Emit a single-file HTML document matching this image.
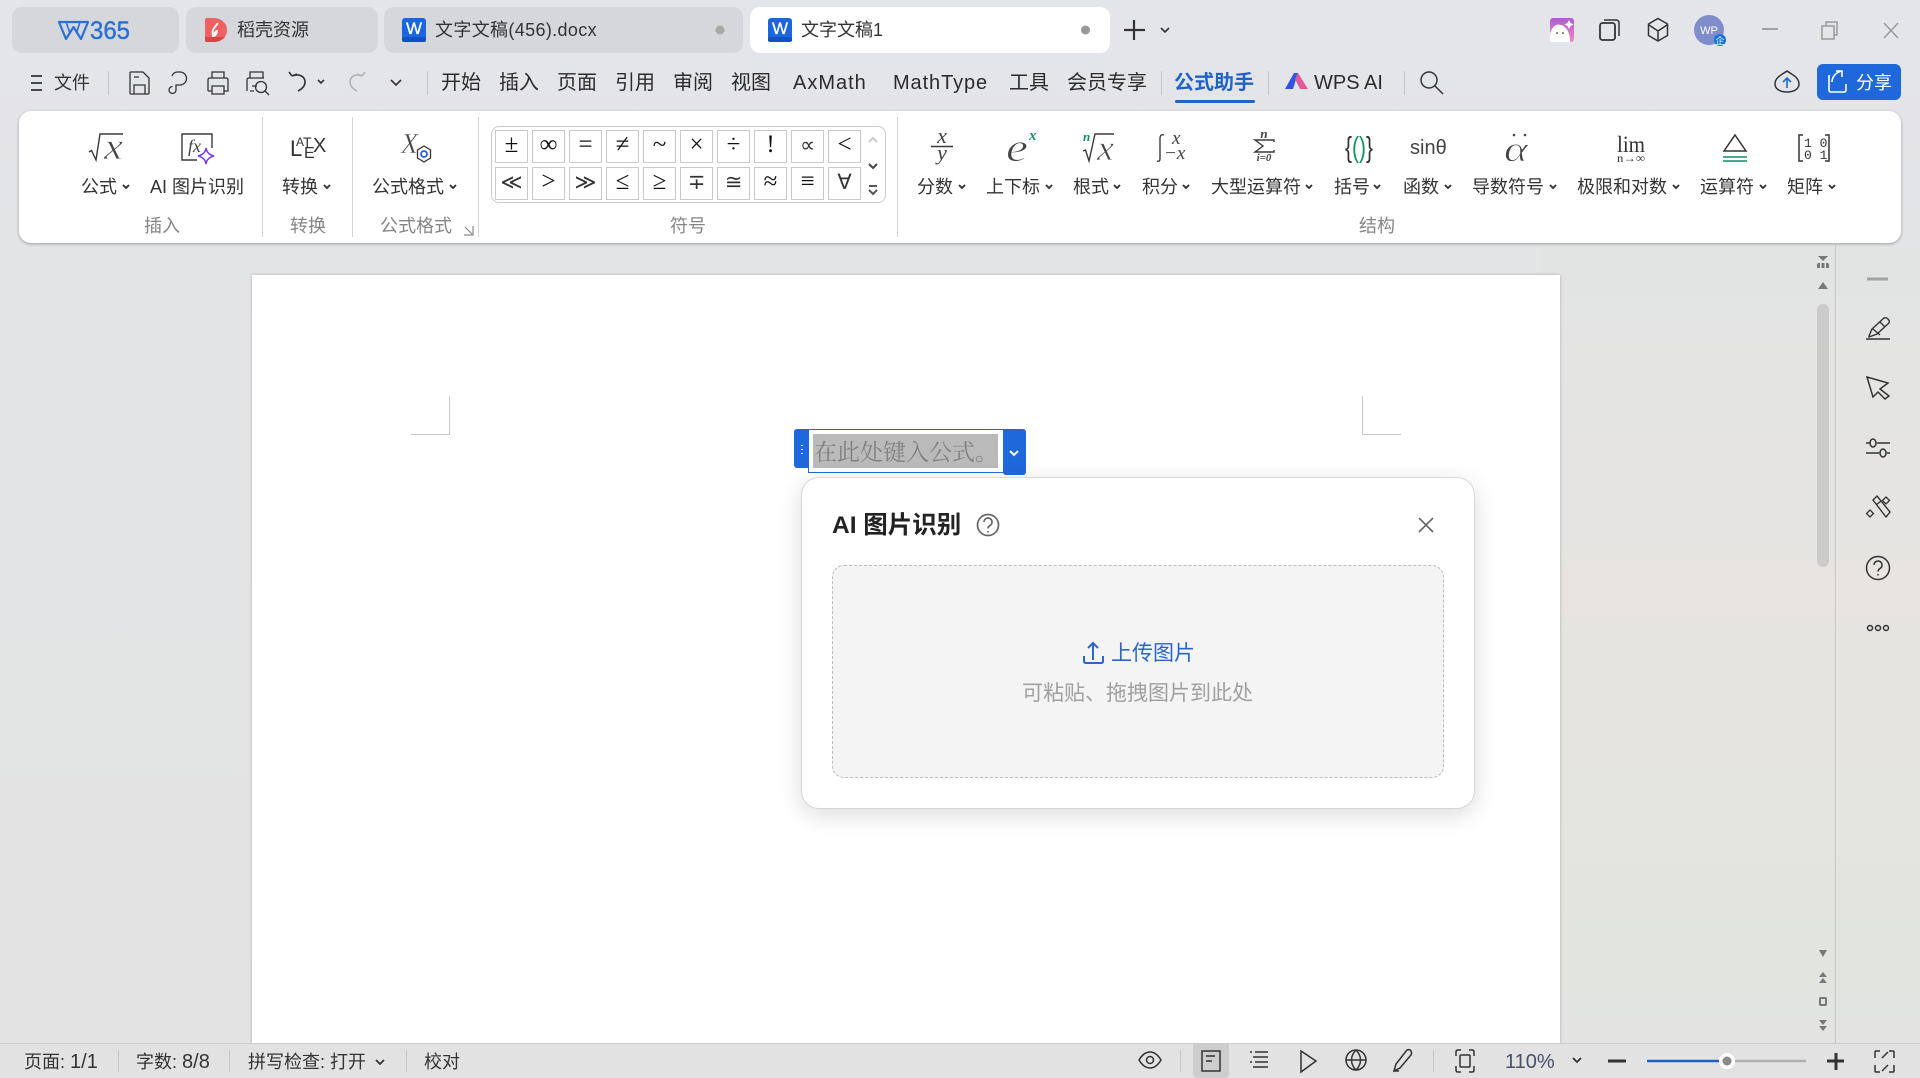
<!DOCTYPE html>
<html lang="zh"><head><meta charset="utf-8"><title>文字文稿1</title>
<style>
html,body{margin:0;padding:0}
body{width:1920px;height:1078px;overflow:hidden;position:relative;font-family:"Liberation Sans","Noto Sans CJK SC",sans-serif;color:#333;
background:linear-gradient(180deg,#e4e5e9 0,#e3e4e6 260px,#e3e3e3 1078px)}
.a{position:absolute;box-sizing:border-box}
.t{position:absolute;white-space:nowrap;height:24px;line-height:24px;font-size:18px;color:#333}
.m{font-size:20px;color:#2b2b2b}
.g{color:#858585}
.tab{position:absolute;top:7px;height:46px;background:#d6d7da;border-radius:10px}
.div{position:absolute;width:1px;background:#c6c7c9}
.c{position:absolute;width:31px;height:31px;border:1px solid #c9c9c9;background:#fff;text-align:center;font:25px/27px "Liberation Serif","DejaVu Sans",serif;color:#111}
.d{font:21px/28px "DejaVu Sans",sans-serif;color:#333}
svg{position:absolute;left:0;top:0;pointer-events:none}
</style></head><body>
<div class="a" style="left:1540px;top:250px;width:380px;height:793px;background:linear-gradient(180deg,#e2e4e4 0,#e7e4e1 340px,#e2e4e0 720px,#e3e4e2 100%)"></div>
<!-- tabs -->
<div class="tab" style="left:12px;width:167px"></div>
<div class="tab" style="left:186px;width:192px"></div>
<div class="tab" style="left:384px;width:359px"></div>
<div class="tab" style="left:750px;width:360px;background:#fff"></div>
<div class="t" style="left:237px;top:18px">稻壳资源</div>
<div class="t" style="left:435px;top:18px;letter-spacing:.35px">文字文稿(456).docx</div>
<div class="t" style="left:801px;top:18px">文字文稿1</div>
<!-- toolbar -->
<div class="t" style="left:54px;top:71px">文件</div>
<div class="div" style="left:108px;top:71px;height:24px"></div>
<div class="div" style="left:427px;top:71px;height:24px"></div>
<div class="div" style="left:1161px;top:71px;height:24px"></div>
<div class="div" style="left:1268px;top:71px;height:24px"></div>
<div class="div" style="left:1404px;top:71px;height:24px"></div>
<div class="t m" style="left:441px;top:71px">开始</div>
<div class="t m" style="left:499px;top:71px">插入</div>
<div class="t m" style="left:557px;top:71px">页面</div>
<div class="t m" style="left:615px;top:71px">引用</div>
<div class="t m" style="left:673px;top:71px">审阅</div>
<div class="t m" style="left:731px;top:71px">视图</div>
<div class="t m" style="left:793px;top:71px;letter-spacing:1px">AxMath</div>
<div class="t m" style="left:893px;top:71px;letter-spacing:.9px">MathType</div>
<div class="t m" style="left:1009px;top:71px">工具</div>
<div class="t m" style="left:1067px;top:71px">会员专享</div>
<div class="t m" style="left:1174px;top:71px;color:#1f62c8;font-weight:bold">公式助手</div>
<div class="a" style="left:1175px;top:100px;width:80px;height:3px;background:#1f62c8;border-radius:2px"></div>
<div class="t m" style="left:1314px;top:71px">WPS AI</div>
<div class="a" style="left:1817px;top:64px;width:84px;height:36px;background:#1f68dc;border-radius:6px"></div>
<div class="t" style="left:1856px;top:71px;color:#fff">分享</div>
<!-- ribbon -->
<div class="a" style="left:19px;top:111px;width:1882px;height:132px;background:#fff;border-radius:12px;box-shadow:0 1px 3px rgba(0,0,0,.3)"></div>
<div class="div" style="left:262px;top:117px;height:120px;background:#d4d4d4"></div>
<div class="div" style="left:352px;top:117px;height:120px;background:#d4d4d4"></div>
<div class="div" style="left:478px;top:117px;height:120px;background:#d4d4d4"></div>
<div class="div" style="left:897px;top:117px;height:120px;background:#d4d4d4"></div>
<div class="t" style="left:81px;top:175px">公式</div>
<div class="t" style="left:150px;top:175px">AI 图片识别</div>
<div class="t" style="left:282px;top:175px">转换</div>
<div class="t" style="left:372px;top:175px">公式格式</div>
<div class="t" style="left:917px;top:175px">分数</div>
<div class="t" style="left:986px;top:175px">上下标</div>
<div class="t" style="left:1073px;top:175px">根式</div>
<div class="t" style="left:1142px;top:175px">积分</div>
<div class="t" style="left:1211px;top:175px">大型运算符</div>
<div class="t" style="left:1334px;top:175px">括号</div>
<div class="t" style="left:1403px;top:175px">函数</div>
<div class="t" style="left:1472px;top:175px">导数符号</div>
<div class="t" style="left:1577px;top:175px">极限和对数</div>
<div class="t" style="left:1700px;top:175px">运算符</div>
<div class="t" style="left:1787px;top:175px">矩阵</div>
<div class="t g" style="left:144px;top:214px">插入</div>
<div class="t g" style="left:290px;top:214px">转换</div>
<div class="t g" style="left:380px;top:214px">公式格式</div>
<div class="t g" style="left:670px;top:214px">符号</div>
<div class="t g" style="left:1359px;top:214px">结构</div>
<!-- symbol grid -->
<div class="a" style="left:491px;top:126px;width:395px;height:77px;border:1px solid #cbcbcb;border-radius:8px"></div>
<div class="c" style="left:495px;top:130px">±</div><div class="c" style="left:532px;top:130px">∞</div><div class="c" style="left:569px;top:130px">=</div><div class="c" style="left:606px;top:130px">≠</div><div class="c" style="left:643px;top:130px">~</div><div class="c" style="left:680px;top:130px">×</div><div class="c" style="left:717px;top:130px">÷</div><div class="c" style="left:754px;top:130px">!</div><div class="c d" style="left:791px;top:130px">∝</div><div class="c" style="left:828px;top:130px">&lt;</div>
<div class="c d" style="left:495px;top:167px">≪</div><div class="c" style="left:532px;top:167px">&gt;</div><div class="c d" style="left:569px;top:167px">≫</div><div class="c" style="left:606px;top:167px">≤</div><div class="c" style="left:643px;top:167px">≥</div><div class="c d" style="left:680px;top:167px">∓</div><div class="c d" style="left:717px;top:167px">≅</div><div class="c" style="left:754px;top:167px">≈</div><div class="c" style="left:791px;top:167px">≡</div><div class="c d" style="left:828px;top:167px">∀</div>
<!-- page -->
<div class="a" style="left:252px;top:275px;width:1308px;height:768px;background:#fff;box-shadow:0 0 3px rgba(0,0,0,.25)"></div>
<div class="a" style="left:411px;top:396px;width:39px;height:39px;border-right:1px solid #c8c8c8;border-bottom:1px solid #c8c8c8"></div>
<div class="a" style="left:1362px;top:396px;width:39px;height:39px;border-left:1px solid #c8c8c8;border-bottom:1px solid #c8c8c8"></div>
<!-- scrollbar -->
<div class="a" style="left:1817px;top:304px;width:12px;height:263px;background:#cbcbca;border-radius:6px"></div>
<div class="div" style="left:1835px;top:243px;height:800px;background:#c8c9c8"></div>
<!-- formula box -->
<div class="a" style="left:794px;top:429px;width:15px;height:39px;background:#1f68dc;border-radius:3px 0 0 3px"></div>
<div class="a" style="left:1003px;top:429px;width:23px;height:46px;background:#1f68dc;border-radius:0 3px 3px 3px"></div>
<div class="a" style="left:808px;top:429px;width:196px;height:44px;border:1px solid #1f68dc;background:#fff"></div>
<div class="a" style="left:813px;top:434px;width:185px;height:34px;background:#bababa"></div>
<div class="t" style="left:814px;top:439px;height:27px;line-height:27px;font-size:23px;color:#808080;font-family:'Liberation Serif','Noto Serif CJK SC',serif">在此处键入公式。</div>
<!-- dialog -->
<div class="a" style="left:801px;top:477px;width:674px;height:332px;background:#fff;border:1px solid #d8d8d8;border-radius:18px;box-shadow:0 6px 24px rgba(0,0,0,.14)"></div>
<div class="t" style="left:832px;top:514px;font-size:24.5px;font-weight:bold;color:#222">AI 图片识别</div>
<div class="a" style="left:832px;top:565px;width:612px;height:213px;background:#f4f4f4;border:1px dashed #bcbcbc;border-radius:12px"></div>
<div class="t" style="left:1111px;top:642px;font-size:21px;color:#2a66cc">上传图片</div>
<div class="t" style="left:1022px;top:682px;font-size:21px;color:#a0a0a0">可粘贴、拖拽图片到此处</div>
<!-- status bar -->
<div class="a" style="left:0;top:1043px;width:1920px;height:35px;background:#e2e2e2;border-top:1px solid #cdcdcd"></div>
<div class="a" style="left:1193px;top:1043px;width:36px;height:35px;background:#cdcdcd;border-radius:0 0 4px 4px"></div>
<div class="t" style="left:24px;top:1050px">页面: <span style="font-size:20px">1/1</span></div>
<div class="div" style="left:118px;top:1050px;height:22px"></div>
<div class="t" style="left:136px;top:1050px">字数: <span style="font-size:20px">8/8</span></div>
<div class="div" style="left:229px;top:1050px;height:22px"></div>
<div class="t" style="left:248px;top:1050px">拼写检查: 打开</div>
<div class="div" style="left:406px;top:1050px;height:22px"></div>
<div class="t" style="left:424px;top:1050px">校对</div>
<div class="div" style="left:1180px;top:1050px;height:22px"></div>
<div class="div" style="left:1433px;top:1050px;height:22px"></div>
<div class="t" style="left:1505px;top:1050px;font-size:20px;color:#48506a">110%</div>

<svg width="1920" height="1078" viewBox="0 0 1920 1078" fill="none" stroke="#333" stroke-width="1.5">
<!-- W365 -->
<g stroke="#2a6fd6" stroke-width="2.2" stroke-linejoin="round"><path d="M59 22H88L81 39L73.500 27L66 39Z"/><path d="M66 22L70 33M80 22L76.500 33" stroke-width="1.6"/></g>
<text x="90" y="39" font-size="25" fill="#2a6fd6" stroke="#2a6fd6" stroke-width=".4" font-family="Liberation Sans" textLength="40" lengthAdjust="spacingAndGlyphs">365</text>
<!-- daoke -->
<path d="M205 20q0-2 2-2h6c8 0 14 5 14 12s-6 12-14 12h-6q-2 0-2-2z" fill="#ef6060" stroke="none"/><path d="M205 37h20q-4 5-12 5h-6q-2 0-2-2z" fill="#d94444" stroke="none"/>
<path d="M218 23c-2 3-4 4-5 7-1 2 0 4 0 6 2 0 4-2 4-5-1 0-2 1-3 3" stroke="#fff" stroke-width="1.8"/>
<!-- W docs -->
<rect x="402" y="18" width="24" height="24" rx="3" fill="#1a66e0" stroke="none"/><rect x="402" y="37" width="24" height="5" rx="2" fill="#1450c0" stroke="none"/>
<text x="414" y="34" text-anchor="middle" font-size="17" fill="#fff" stroke="#fff" stroke-width=".3" font-family="Liberation Sans">W</text>
<rect x="768" y="18" width="24" height="24" rx="3" fill="#1a66e0" stroke="none"/><rect x="768" y="37" width="24" height="5" rx="2" fill="#1450c0" stroke="none"/>
<text x="780" y="34" text-anchor="middle" font-size="17" fill="#fff" stroke="#fff" stroke-width=".3" font-family="Liberation Sans">W</text>
<circle cx="720" cy="30" r="4.5" fill="#a8a8a8" stroke="none"/><circle cx="1085.5" cy="30" r="4.5" fill="#999" stroke="none"/>
<path d="M1134 20V40M1124 30H1145" stroke-width="2.2"/><path d="M1161 28L1165 32L1169 28" stroke-width="1.6"/>
<!-- top right -->
<defs><linearGradient id="pg" x1="0" y1="0" x2="0" y2="1"><stop offset="0" stop-color="#b05ad8"/><stop offset="1" stop-color="#f08ac0"/></linearGradient></defs>
<rect x="1550" y="18" width="24" height="24" rx="3" fill="url(#pg)" stroke="none"/>
<path d="M1550 40c0-4 0-8 2-11 2-4 6-5 9-4 4 1 7 5 8 9 1 3 1 6 1 8h-20z" fill="#fff" stroke="none"/><path d="M1569 20l1.500 3 3 1.500-3 1.500-1.500 3-1.500-3-3-1.500 3-1.500z" fill="#fff" stroke="none"/>
<circle cx="1557" cy="33" r="1" fill="#664" stroke="none"/><circle cx="1563" cy="33" r="1" fill="#664" stroke="none"/>
<rect x="1600" y="23" width="15" height="17" rx="2.500" stroke-width="1.8"/><path d="M1604 20h12q3 0 3 3v13" stroke-width="1.500"/>
<path d="M1658 18.500l9.500 5.500v11.500l-9.500 5.500-9.500-5.500V24zM1649 25l9 6 9-6M1658 31v10" stroke-width="1.500"/>
<circle cx="1709" cy="30" r="15" fill="#7f8dcc" stroke="none"/><text x="1709" y="34" text-anchor="middle" font-size="11" fill="#fff" stroke="none" font-family="Liberation Sans">WP</text>
<circle cx="1720" cy="40" r="6" fill="#1473e6" stroke="none"/><text x="1720" y="44" text-anchor="middle" font-size="9" fill="#fff" stroke="none" font-family="Noto Sans CJK SC">企</text>
<path d="M1762 29H1778" stroke="#999" stroke-width="1.800"/>
<rect x="1822" y="26" width="12" height="13" stroke="#999" stroke-width="1.500"/><path d="M1826 26v-4h11v13h-3" stroke="#999" stroke-width="1.500"/>
<path d="M1884 23L1898 38M1898 23L1884 38" stroke="#999" stroke-width="1.500"/>
<!-- toolbar left icons -->
<path d="M31 76H42M31 83H42M31 90H42" stroke-width="1.800"/>
<path d="M131 72h12l6 6v15q0 1-1 1h-17q-1 0-1-1V73q0-1 1-1zM134 94v-9h11v9M134 77h5" stroke-width="1.300"/>
<path d="M177 72h3a6 6 0 0 1 0 13h-4v5a3.500 3.500 0 0 1-7 0 3.500 3.500 0 0 1 3.500-3.500M177 72a6 6 0 0 0-5 4" stroke-width="1.300"/>
<path d="M212 78v-6h12v6M208 91V80q0-2 2-2h16q2 0 2 2v11h-4M212 86h12v8h-12zM208 91h4" stroke-width="1.300"/>
<path d="M250 78v-6h13v6M247 91V80q0-2 2-2h15M250 91h4M252 86h5" stroke-width="1.300"/><circle cx="261" cy="87" r="5.500" stroke-width="1.300"/><path d="M265 91l4 4" stroke-width="1.300"/>
<path d="M292 76l-3-4M292 76l5-2M292 76c8-3 13 1 13 6 0 4-3 7-7 9" stroke-width="1.600"/>
<path d="M318 80L321 83L324 80" stroke-width="1.600"/>
<path d="M362 76l3-4M362 76l-5-2M362 76c-7-3-12 1-12 6 0 4 3 7 7 9" stroke="#b4b4b4" stroke-width="1.600"/>
<path d="M391 80L396 85L401 80" stroke-width="1.600"/>
<!-- wps ai logo -->
<path d="M1285 89L1294 73H1298L1293 89Z" fill="#2f55e8" stroke="none"/><path d="M1298 73L1308 89H1300L1295 79Z" fill="#e05a9a" stroke="none"/>
<circle cx="1429" cy="80" r="8" stroke-width="1.500"/><path d="M1435 86L1443 94" stroke-width="1.500"/>
<path d="M1787 71c4 3 12 6 12 13 0 5-5 8-12 8s-12-3-12-8c0-7 8-10 12-13z"/><path d="M1787 88V79M1783 82L1787 78L1791 82" stroke="#1f68dc" stroke-width="1.600"/>
<path d="M1836 72l6 0 0 6M1842 72c-6 1-10 6-10 11M1829 76v15q0 2 2 2h13q2 0 2-2v-6" stroke="#fff" stroke-width="1.600" transform="translate(0,-1)"/>
<!-- ribbon chevrons -->
<g stroke-width="1.900" stroke="#333">
<path d="M123 185l3 3 3-3M324 185l3 3 3-3M450 185l3 3 3-3M959 185l3 3 3-3M1046 185l3 3 3-3M1114 185l3 3 3-3M1183 185l3 3 3-3M1306 185l3 3 3-3M1374 185l3 3 3-3M1445 185l3 3 3-3M1550 185l3 3 3-3M1673 185l3 3 3-3M1760 185l3 3 3-3M1829 185l3 3 3-3"/>
</g>
<path d="M464 235h9v-9M465 227l7 7" stroke="#888" stroke-width="1.200"/>
<!-- symbol scroll -->
<path d="M869 142l4-4 4 4" stroke="#ccc" stroke-width="2"/><path d="M869 164l4 4 4-4" stroke="#444" stroke-width="2"/><path d="M869 186h8M869 190l4 4 4-4" stroke="#555" stroke-width="2"/>
<g font-family="Liberation Serif" font-style="italic" fill="#444" stroke="none">
<text x="104" y="159" font-size="38" textLength="19" lengthAdjust="spacingAndGlyphs" stroke="#fff" stroke-width=".7">x</text>
<text x="188" y="152" font-size="18">fx</text>
<text x="401" y="153" font-size="28" stroke="#fff" stroke-width=".4">X</text>
<text x="942" y="143" font-size="22" text-anchor="middle">x</text>
<text x="942" y="160" font-size="22" text-anchor="middle">y</text>
<text x="1006" y="161" font-size="40" textLength="22" lengthAdjust="spacingAndGlyphs" stroke="#fff" stroke-width=".8">e</text>
<text x="1029" y="140" font-size="15" font-weight="bold" fill="#14906a">x</text>
<text x="1083" y="141" font-size="13" font-weight="bold" fill="#14906a">n</text>
<text x="1097" y="160" font-size="36" textLength="17" lengthAdjust="spacingAndGlyphs" stroke="#fff" stroke-width=".7">x</text>
<text x="1172" y="144" font-size="19">x</text>
<text x="1164" y="159" font-size="19">−x</text>
<text x="1264" y="138" font-size="13" font-weight="bold" text-anchor="middle">n</text>
<text x="1264" y="161" font-size="11" font-weight="bold" text-anchor="middle">i=0</text>
<text x="1504" y="161" font-size="36" textLength="24" lengthAdjust="spacingAndGlyphs" stroke="#fff" stroke-width=".8">α</text>
</g>
<g stroke="#3a3a3a" stroke-width="1.400">
<path d="M89 152l2.500-1.500L96 160l4-26h23"/>
<path d="M212 148v-14h-30v26h15"/>
<path d="M931 146.500h22"/>
<path d="M1083 151l2.500-1 3.500 11 6-27h19"/>
<path d="M1157 161c3 1 3-1 3-3V138c0-2 1-4 4-3"/>
<path d="M1274 142v-2h-19l8 6-8 6h19v-2"/>
</g>
<circle cx="424" cy="154" r="3" stroke="#2a5fe0" stroke-width="1.800"/><path d="M424 146l6.500 4v8l-6.500 4-6.500-4v-8z" stroke-width="1.300"/>
<path d="M206 148c.5 4 3.500 7 8 8-4.500 1-7.500 4-8 8-.5-4-3.500-7-8-8 4.500-1 7.500-4 8-8z" stroke="#7a3cf0" stroke-width="1.600"/>
<g font-family="Liberation Sans" fill="#333" stroke="none">
<text x="290" y="156" font-size="22">L</text><text x="296" y="146" font-size="12">A</text><text x="303" y="147" font-size="14">T</text><text x="304" y="158" font-size="16">E</text><text x="313" y="152" font-size="20">X</text>
<text x="1410" y="154" font-size="20" fill="#444">sinθ</text>
<text x="1345" y="157" font-size="29" textLength="28" lengthAdjust="spacingAndGlyphs">{<tspan fill="#14906a">()</tspan>}</text>
</g>
<g font-family="Liberation Serif" fill="#333" stroke="none">
<text x="1617" y="152" font-size="23" textLength="28" lengthAdjust="spacingAndGlyphs">lim</text>
<text x="1617" y="162" font-size="12" textLength="28" lengthAdjust="spacingAndGlyphs">n→∞</text>
</g>
<g font-family="Liberation Mono" fill="#333" stroke="none" font-size="13"><text x="1804" y="147">1 0</text><text x="1804" y="159">0 1</text></g>
<circle cx="1514" cy="135" r="1.300" fill="#444" stroke="none"/><circle cx="1525" cy="135" r="1.300" fill="#444" stroke="none"/>
<path d="M1735 135l11 16h-22z" stroke-width="1.500"/><path d="M1723 157h24M1723 161h24" stroke="#0f9060" stroke-width="1.500"/>
<path d="M1803 135h-4v26h4M1825 135h4v26h-4" stroke-width="1.500"/>
<!-- formula handle -->
<path d="M802 445v1M802 449v1M802 453v1" stroke="#fff" stroke-width="2"/><path d="M1010 451l4 4 4-4" stroke="#fff" stroke-width="2"/>
<!-- dialog icons -->
<circle cx="988" cy="525" r="10.500" stroke="#666" stroke-width="1.700"/><path d="M984 522a4 4 0 1 1 6 3.500c-1.500 1-2 1.500-2 3" stroke="#666" stroke-width="1.700"/><path d="M988 531v1.500" stroke="#666" stroke-width="1.700"/>
<path d="M1419 518L1433 532M1433 518L1419 532" stroke="#666" stroke-width="1.600"/>
<path d="M1093 660V643M1088 648L1093 643L1098 648M1084 656v5q0 2 2 2h15q2 0 2-2v-5" stroke="#2a66cc" stroke-width="2"/>
<!-- side panel -->
<path d="M1867 279H1888" stroke="#a2a2a2" stroke-width="3"/>
<path d="M1866 339H1890" stroke-width="1.500"/><path d="M1869 335l3-7 12-11q2-1 4 1t1 4l-12 11-8 3zM1873 328l7 6M1880 321l5 5" stroke-width="1.400" transform="translate(0,1)"/>
<path d="M1867 377L1888 383L1880 389L1889 396L1885 399L1878 392L1873 397Z" stroke-width="1.500"/>
<path d="M1866 443H1870M1877 443H1890M1866 453H1879M1887 453H1890"/><ellipse cx="1873" cy="443" rx="3" ry="4"/><ellipse cx="1883" cy="453" rx="3" ry="4"/>
<path d="M1873 500L1877 496L1890 512L1886 517ZM1876 505L1881 501" stroke-width="1.400"/><path d="M1886 497l3.500 3.500-3.500 3.500-3.500-3.500zM1870 510l3.500 3.500-3.500 3.500-3.500-3.500z" stroke-width="1.300"/>
<circle cx="1878" cy="568" r="11.500"/><path d="M1874 565a4 4 0 1 1 6 3.500c-1.500 1-2 1.500-2 3M1878 574v1.500"/>
<circle cx="1870" cy="628" r="2.500"/><circle cx="1878" cy="628" r="2.500"/><circle cx="1886" cy="628" r="2.500"/>
<!-- scroll ends -->
<g fill="#777" stroke="none">
<path d="M1818 256h10l-5 5zM1817 265q0-2 2-2h1v5h-3zM1821.500 263h3v5h-3zM1826 263h1q2 0 2 2v3h-3z"/>
<path d="M1823 282l5 7h-10z"/>
<path d="M1819 950h8l-4 7z"/>
<path d="M1823 972l4 5h-8zM1823 978l4 5h-8z"/>
<path d="M1819 1020h8l-4 5zM1819 1026h8l-4 5z"/>
</g>
<rect x="1820" y="998" width="6" height="7" rx="1" stroke="#777" stroke-width="2"/>
<!-- status icons -->
<path d="M376 1060l4 4 4-4" stroke-width="1.800"/>
<path d="M1139 1060c3-5 7-8 11-8s8 3 11 8c-3 5-7 8-11 8s-8-3-11-8z"/><circle cx="1150" cy="1060" r="3.500"/>
<path d="M1202 1051h18v20h-18zM1206 1056h9M1206 1061h6"/>
<path d="M1250 1052h2M1255 1052h13M1253 1057h15M1250 1062h2M1255 1062h13M1253 1067h15"/>
<path d="M1301 1051l15 10-15 11z"/>
<circle cx="1356" cy="1060" r="10"/><path d="M1346 1060h20M1356 1050c-6 6-6 14 0 20 6-6 6-14 0-20"/>
<path d="M1394 1071l2-7 11-14q3-1 4 1t0 4l-11 13z M1399 1071h-5"/>
<path d="M1456 1056v-4q0-2 2-2h3M1469 1050h3q2 0 2 2v4M1474 1066v4q0 2-2 2h-3M1461 1072h-3q-2 0-2-2v-4"/><rect x="1460" y="1055" width="10" height="12" rx="1"/>
<path d="M1573 1058l4 4 4-4" stroke-width="1.800"/>
<path d="M1608 1061H1626" stroke-width="3"/>
<path d="M1647 1061H1719" stroke="#1f5fc0" stroke-width="2.500"/><path d="M1735 1061H1806" stroke="#b0b0b0" stroke-width="2.500"/>
<circle cx="1727" cy="1061" r="8" fill="#fff" stroke="none"/><circle cx="1727" cy="1061" r="4.500" fill="#8a8a8a" stroke="none"/>
<path d="M1827 1061H1844M1836 1053V1070" stroke-width="3"/>
<path d="M1875 1058v-6q0-1 1-1h4M1889 1051h4q1 0 1 1v6M1894 1065v6q0 1-1 1h-4M1880 1072h-4q-1 0-1-1v-6M1888 1052l-6 6M1882 1071l6-6" stroke-width="1.500"/>
</svg>
</body></html>
